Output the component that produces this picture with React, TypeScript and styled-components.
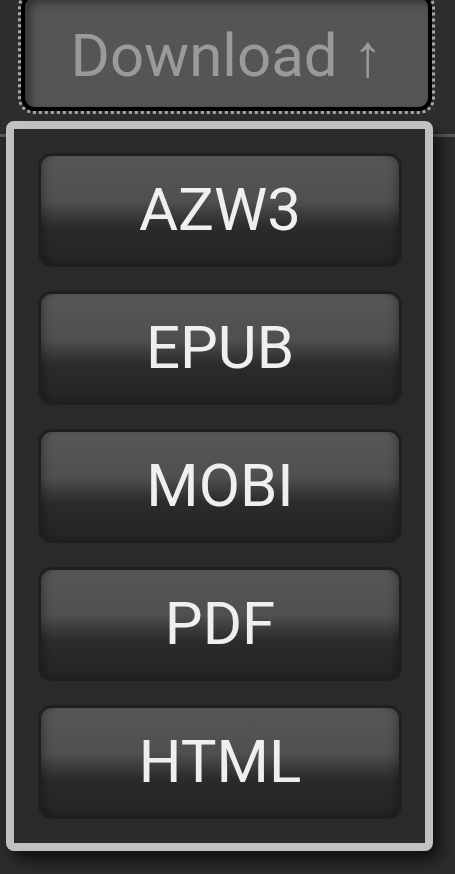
import React, { FC } from 'react'
import styled, { createGlobalStyle } from 'styled-components'

const GlobalStyle = createGlobalStyle`
  html, body {
    margin: 0;
    padding: 0;
    background: #2c2c2c;
    overflow: hidden;
  }
  body {
    font-family: Roboto, "Liberation Sans", sans-serif;
  }
`

const Page = styled.div`
  position: relative;
  width: 455px;
  height: 874px;
  overflow: hidden;
  background: #2c2c2c;
`

const Header = styled.header`
  display: flex;
  align-items: flex-start;
  height: 137px;
  padding-left: 21px;
  border-bottom: 3px solid #5a5a5a;
  box-sizing: border-box;
  background: #2e2e2e;
`

const DownloadButton = styled.button`
  margin-top: -6px;
  width: 411px;
  height: 117px;
  box-sizing: border-box;
  border: 4px solid #000;
  border-radius: 13px;
  background: #555;
  box-shadow: inset 5px 5px 9px rgba(0, 0, 0, 0.4);
  outline: 3px dotted #a8a8a8;
  outline-offset: 0;
  color: #9a9a9a;
  font-family: Roboto, "Liberation Sans", sans-serif;
  font-size: 60px;
  padding: 6px 0 0;
  line-height: 1;
`

const Content = styled.main`
  display: flex;
  padding-top: 300px;
`

const SideLabel = styled.div`
  writing-mode: vertical-rl;
  transform: rotate(180deg);
  margin-left: -50px;
  color: #e8e8e8;
  font-size: 56px;
  line-height: 1;
  white-space: nowrap;
`

const Menu = styled.div`
  position: absolute;
  top: 121px;
  left: 6px;
  width: 427px;
  box-sizing: border-box;
  border: 8px solid #c1c1c1;
  border-radius: 8px;
  background: #2a2a2a;
  box-shadow: 7px 9px 16px rgba(0, 0, 0, 0.65);
  padding: 24px 23px 24px 24px;
  display: flex;
  flex-direction: column;
  gap: 24px;
`

const FormatButton = styled.button`
  height: 108px;
  margin: 3px;
  border: none;
  border-radius: 11px;
  box-shadow:
    0 0 0 3px #1f1f1f,
    inset 8px 0 10px -6px rgba(0, 0, 0, 0.35),
    inset -8px 0 10px -6px rgba(0, 0, 0, 0.35);
  background: linear-gradient(
    to bottom,
    #575757 0%,
    #4f4f4f 42%,
    #3a3a3a 55%,
    #2b2b2b 66%,
    #242424 100%
  );
  color: #efefef;
  font-family: Roboto, "Liberation Sans", sans-serif;
  font-size: 60px;
  line-height: 1;
  padding: 0;
`

const formats = ['AZW3', 'EPUB', 'MOBI', 'PDF', 'HTML']

const App: FC = () => {
  return (
    <Page>
      <GlobalStyle />
      <Header>
        <DownloadButton>Download ↑</DownloadButton>
      </Header>
      <Content>
        <SideLabel>Book Info</SideLabel>
      </Content>
      <Menu>
        {formats.map((f) => (
          <FormatButton key={f}>{f}</FormatButton>
        ))}
      </Menu>
    </Page>
  )
}

export default App
